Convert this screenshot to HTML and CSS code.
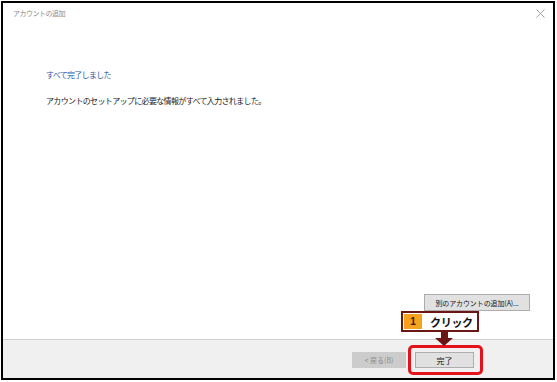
FILE: index.html
```html
<!DOCTYPE html>
<html lang="ja">
<head>
    <meta charset="UTF-8">
    <title>アカウントの追加</title>
    <link rel="stylesheet" href="styles.css">
</head>
<body>

<div class="window">
    <div class="titlebar">
        <span class="title">アカウントの追加</span>
        <svg class="close" width="9" height="9" viewBox="0 0 9 9">
            <path d="M0.5 0.5 L8.5 8.5 M8.5 0.5 L0.5 8.5" stroke="#a0a0a0" stroke-width="1" fill="none"/>
        </svg>
    </div>

    <div class="content">
        <div class="heading">すべて完了しました</div>
        <div class="message">アカウントのセットアップに必要な情報がすべて入力されました。</div>
        <button class="btn btn-add">別のアカウントの追加(A)...</button>
    </div>

    <div class="footer">
        <button class="btn btn-back" disabled>&lt; 戻る(B)</button>
        <span class="highlight">
            <button class="btn btn-done">完了</button>
        </span>
    </div>

    <!-- annotation over the dialog -->
    <div class="callout">
        <span class="step">1</span>
        <span class="callout-text">クリック</span>
    </div>
    <div class="arrow-stem"></div>
    <div class="arrow-head"></div>
</div>

</body>
</html>
```

FILE: styles.css
```css
* { box-sizing: border-box; }
body { margin: 0; width: 557px; height: 382px; background: #fff; font-family: 'Noto Sans CJK JP', 'Noto Sans', sans-serif; color: #222; overflow: hidden; }

.window { position: relative; margin: 1px 0 0 1px; width: 554px; height: 379px; border: 2px solid #000; background: #fff; display: flex; flex-direction: column; }

/* Title bar */
.titlebar { height: 22px; display: flex; align-items: center; justify-content: space-between; padding: 0 8px 2px 10px; }
.title { font-size: 7px; letter-spacing: -0.5px; color: #8a8a8a; }
.close { margin-top: 1px; }

/* Body */
.content { flex: 1; display: flex; flex-direction: column; padding: 44px 0 0 43px; }
.heading { font-size: 8px; line-height: 12px; letter-spacing: -0.7px; color: #2b56a8; }
.message { font-size: 8px; line-height: 12px; letter-spacing: -0.65px; color: #222; margin-top: 14px; }

.btn { font-family: inherit; font-size: 7px; height: 17px; padding: 0; border: 1px solid #adadad; background: #e1e1e1; color: #111; white-space: nowrap; }
.btn-add { align-self: flex-end; margin: auto 23px 28px 0; width: 106px; letter-spacing: -0.1px; }

/* Footer */
.footer { height: 39px; border-top: 1px solid #cfcfcf; background: #f0f0f0; display: flex; justify-content: flex-end; align-items: flex-start; padding-right: 70px; }
.btn-back { width: 54px; height: 16px; margin-top: 12px; margin-right: 2px; background: #cccccc; border-color: #cccccc; color: #8c8c8c; }
.highlight { margin-top: 5px; padding: 4px 6px 4px 4px; border: 3px solid #e3121b; border-radius: 5px; display: flex; }
.btn-done { width: 59px; height: 16px; font-size: 8px; }

/* Annotation */
.callout { position: absolute; left: 398px; top: 308px; width: 78px; height: 21px; border: 2px solid #6b1515; background: #fff; display: flex; align-items: stretch; }
.step { width: 18px; margin: 1px 0 1px 1px; background: #f5a21e; color: #3a1a00; font-size: 10px; font-weight: bold; font-family: 'Liberation Sans', sans-serif; display: flex; align-items: center; justify-content: center; }
.callout-text { flex: 1; font-size: 11px; font-weight: bold; letter-spacing: -0.3px; color: #111; display: flex; align-items: center; padding-left: 8px; }
.arrow-stem { position: absolute; left: 438px; top: 329px; width: 7px; height: 7px; background: #6b1515; }
.arrow-head { position: absolute; left: 432px; top: 335px; width: 0; height: 0; border-left: 9.5px solid transparent; border-right: 9.5px solid transparent; border-top: 8px solid #6b1515; }
```
